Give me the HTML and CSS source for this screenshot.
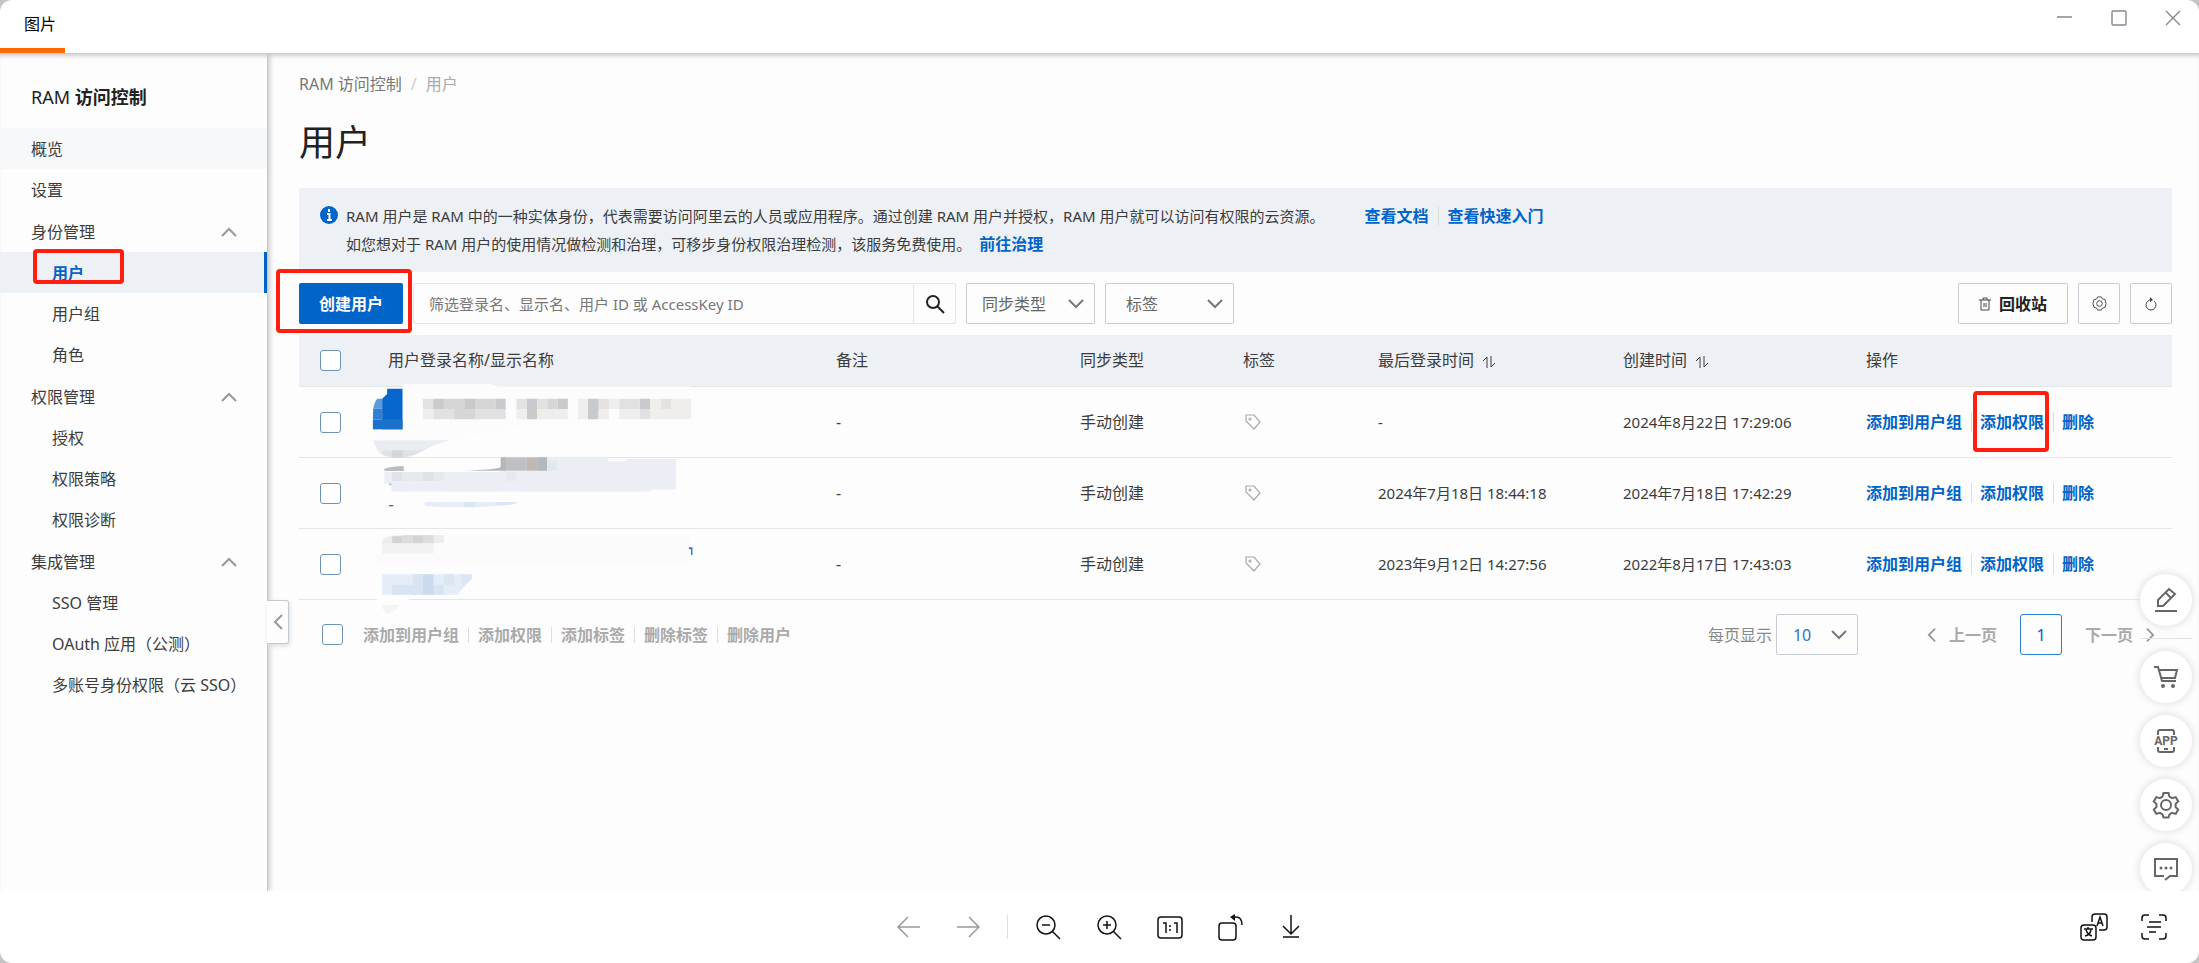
FILE: index.html
```html
<!DOCTYPE html>
<html lang="zh-CN">
<head>
<meta charset="utf-8">
<title>图片</title>
<link rel="stylesheet" href="styles.css">
</head>
<body>
<svg class="defs" aria-hidden="true">
  <symbol id="down" viewBox="0 0 16 10"><path d="M1 1l7 7 7-7"/></symbol>
  <symbol id="up" viewBox="0 0 16 10"><path d="M1 9l7-7 7 7"/></symbol>
  <symbol id="left" viewBox="0 0 10 16"><path d="M9 1L2 8l7 7"/></symbol>
  <symbol id="right" viewBox="0 0 10 16"><path d="M1 1l7 7-7 7"/></symbol>
  <symbol id="tag" viewBox="0 0 16 16"><path d="M1 1h8l6 7-6 7-8-8z"/><circle cx="5" cy="5" r="1"/></symbol>
  <symbol id="sort" viewBox="0 0 14 14"><path d="M1 6l4-4v11M9 1v11l4-4"/></symbol>
  <symbol id="cog" viewBox="0 0 16 16"><path d="M6 1h4l1 2 3 1 1 4-1 4-3 1-1 2H6l-1-2-3-1-1-4 1-4 3-1z"/><circle cx="8" cy="8" r="3"/></symbol>
  <symbol id="gear" viewBox="0 0 28 28"><path d="M11.500 2h5l1 3.600 2.600 1.500 3.600-1 2.500 4.300-2.600 2.600v3l2.600 2.600-2.500 4.300-3.600-1-2.600 1.500-1 3.100h-5l-1-3.100-2.600-1.500-3.600 1-2.500-4.300 2.600-2.600v-3L1.800 10.400l2.500-4.300 3.600 1 2.600-1.500z"/><circle cx="14" cy="14" r="5"/></symbol>
</svg>
<div class="window">
  <header class="titlebar">
    <h1 class="tab">图片</h1>
    <div class="window-controls">
      <button type="button" aria-label="最小化"><svg width="16" height="16" viewBox="0 0 16 16"><path d="M0 7h15"/></svg></button>
      <button type="button" aria-label="最大化"><svg width="16" height="16" viewBox="0 0 16 16"><rect x="1" y="1" width="14" height="14" rx="1"/></svg></button>
      <button type="button" aria-label="关闭"><svg width="16" height="16" viewBox="0 0 16 16"><path d="M1 1l14 14M15 1L1 15"/></svg></button>
    </div>
  </header>

  <div class="viewport">
    <aside class="sidebar">
      <h2 class="product">RAM <b>访问控制</b></h2>
      <nav class="nav">
        <a class="nav-item hover" href="#overview">概览</a>
        <a class="nav-item" href="#settings">设置</a>
        <div class="nav-group">
          <button type="button" class="nav-item">身份管理<svg class="chev" width="16" height="10"><use href="#up"/></svg></button>
          <a class="nav-item sub active" href="#users">用户<span class="mark mark-nav"></span></a>
          <a class="nav-item sub" href="#groups">用户组</a>
          <a class="nav-item sub" href="#roles">角色</a>
        </div>
        <div class="nav-group">
          <button type="button" class="nav-item">权限管理<svg class="chev" width="16" height="10"><use href="#up"/></svg></button>
          <a class="nav-item sub" href="#grants">授权</a>
          <a class="nav-item sub" href="#policies">权限策略</a>
          <a class="nav-item sub" href="#diagnosis">权限诊断</a>
        </div>
        <div class="nav-group">
          <button type="button" class="nav-item">集成管理<svg class="chev" width="16" height="10"><use href="#up"/></svg></button>
          <a class="nav-item sub" href="#sso">SSO 管理</a>
          <a class="nav-item sub" href="#oauth">OAuth 应用（公测）</a>
          <a class="nav-item sub" href="#cloudsso">多账号身份权限（云 SSO）</a>
        </div>
      </nav>
      <button type="button" class="collapse" aria-label="收起"><svg class="chev" width="10" height="16"><use href="#left"/></svg></button>
    </aside>

    <main class="main">
      <nav class="breadcrumb"><a href="#ram">RAM 访问控制</a><span class="slash">/</span><span class="current">用户</span></nav>
      <h2 class="page-title">用户</h2>

      <section class="notice">
        <svg class="info" width="18" height="18" viewBox="0 0 18 18"><circle cx="9" cy="9" r="9"/><path d="M9 3v3M7 8h2.500v6M7 14h5"/></svg>
        <div class="notice-text">
          <p>RAM 用户是 RAM 中的一种实体身份，代表需要访问阿里云的人员或应用程序。通过创建 RAM 用户并授权，RAM 用户就可以访问有权限的云资源。<span class="doc-links"><a href="#docs">查看文档</a><a href="#quickstart">查看快速入门</a></span></p>
          <p>如您想对于 RAM 用户的使用情况做检测和治理，可移步身份权限治理检测，该服务免费使用。<a href="#governance">前往治理</a></p>
        </div>
      </section>

      <div class="toolbar">
        <div class="create-wrap"><button type="button" class="create">创建用户</button><span class="mark mark-create"></span></div>
        <form class="search">
          <input type="search" aria-label="筛选用户" placeholder="筛选登录名、显示名、用户 ID 或 AccessKey ID">
          <button type="button" aria-label="搜索"><svg width="20" height="20" viewBox="0 0 20 20"><circle cx="8" cy="8" r="6"/><path d="M12 12l7 7"/></svg></button>
        </form>
        <div class="select"><select aria-label="同步类型"><option>同步类型</option></select><svg class="chev" width="16" height="10"><use href="#down"/></svg></div>
        <div class="select wide"><select aria-label="标签"><option>标签</option></select><svg class="chev" width="16" height="10"><use href="#down"/></svg></div>
        <div class="tools">
          <button type="button" class="recycle"><svg width="12" height="14" viewBox="0 0 12 14"><path d="M0 3h12M4 3V1h4v2M2 3v10h8V3M5 6v4M7 6v4"/></svg>回收站</button>
          <button type="button" class="square" aria-label="设置"><svg width="15" height="15"><use href="#cog"/></svg></button>
          <button type="button" class="square" aria-label="刷新"><svg width="14" height="14" viewBox="0 0 14 14"><path d="M10 4a5 5 0 1 1-6 0q2-2 4-1"/><path class="solid" d="M6 0l3 3-3 2z"/></svg></button>
        </div>
      </div>

      <div class="table-wrap">
        <table class="users">
          <colgroup><col class="c-check"><col><col class="c-note"><col class="c-sync"><col class="c-tag"><col class="c-login"><col class="c-created"><col class="c-actions"></colgroup>
          <thead>
            <tr>
              <th><input type="checkbox" aria-label="全选"></th>
              <th>用户登录名称/显示名称</th><th>备注</th><th>同步类型</th><th>标签</th>
              <th>最后登录时间<svg class="sort" width="14" height="14"><use href="#sort"/></svg></th>
              <th>创建时间<svg class="sort" width="14" height="14"><use href="#sort"/></svg></th>
              <th>操作</th>
            </tr>
          </thead>
          <tbody>
            <tr>
              <td><input type="checkbox" aria-label="选择用户 1"></td><td></td><td>-</td><td>手动创建</td>
              <td><svg class="tag" width="16" height="16"><use href="#tag"/></svg></td>
              <td class="date">-</td><td class="date">2024年8月22日 17:29:06</td>
              <td><div class="actions"><a href="#add-group">添加到用户组</a><a href="#add-perm">添加权限<span class="mark mark-perm"></span></a><a href="#delete">删除</a></div></td>
            </tr>
            <tr>
              <td><input type="checkbox" aria-label="选择用户 2"></td><td></td><td>-</td><td>手动创建</td>
              <td><svg class="tag" width="16" height="16"><use href="#tag"/></svg></td>
              <td class="date">2024年7月18日 18:44:18</td><td class="date">2024年7月18日 17:42:29</td>
              <td><div class="actions"><a href="#add-group">添加到用户组</a><a href="#add-perm">添加权限</a><a href="#delete">删除</a></div></td>
            </tr>
            <tr>
              <td><input type="checkbox" aria-label="选择用户 3"></td><td></td><td>-</td><td>手动创建</td>
              <td><svg class="tag" width="16" height="16"><use href="#tag"/></svg></td>
              <td class="date">2023年9月12日 14:27:56</td><td class="date">2022年8月17日 17:43:03</td>
              <td><div class="actions"><a href="#add-group">添加到用户组</a><a href="#add-perm">添加权限</a><a href="#delete">删除</a></div></td>
            </tr>
          </tbody>
        </table>
        <svg class="redaction" width="330" height="233" viewBox="280 160 924 699" preserveAspectRatio="none" aria-hidden="true">
          <path fill="#fcfcfc" d="M372 163h246l18 7h540v121H720L500 332H290v-34h82z"/>
          <path fill="#0766cb" d="M328 177h43v122h-57v-92l14-14z"/>
          <path fill="#5b9add" d="M300 207h14v30h-25q3-20 11-30z"/>
          <path fill="#2f7fd3" d="M289 237h25v32h-26z"/>
          <path fill="#1a72cd" d="M288 269h83v30h-83z"/>
          <path fill="#e9edf3" d="M290 332h212q-42 12-70 30-36 20-60 22h-30q-36-4-42-26-8-10-10-26z"/>
          <path fill="#dfe2e7" d="M314 362h118q-36 20-60 22h-30q-18-4-28-12z"/>
          <path fill="#d4d6da" d="M342 362h30v22h-30z"/>
          <g>
            <path fill="#e5e3e2" d="M428 207h29v31h-29zM690 207h29v31h-29zM920 207h29v31h-29zM1094 207h29v31h-29z"/>
            <path fill="#c8cacd" d="M457 207h30v31h-30zM631 207h29v31h-29zM719 207h29v31h-29zM805 207h29v31h-29zM890 207h30v31h-30zM1035 207h29v31h-29z"/>
            <path fill="#d7d6d6" d="M487 207h57v31h-57zM574 207h57v31h-57zM776 207h29v31h-29zM515 238h59v31h-59z"/>
            <path fill="#cacaca" d="M544 207h30v31h-30zM719 238h29v31h-29zM890 238h30v31h-30z"/>
            <path fill="#e2e1e1" d="M748 207h28v31h-28zM978 207h57v31h-57zM457 238h58v31h-58zM574 238h86v31h-86zM1035 238h29v31h-29z"/>
            <path fill="#efeeed" d="M428 238h29v31h-29zM690 238h29v31h-29zM748 238h86v31h-86zM862 207h28v62h-28zM949 207h29v31h-29zM920 238h29v31h-29zM978 238h57v31h-57zM1064 207h30v62h-30zM1094 238h85v31h-85zM1123 207h56v31h-56z"/>
          </g>
          <path fill="#fdfdfd" d="M325 386h320v30l-100 10H378l-3-18h-50z"/>
          <path fill="#ebeff5" d="M646 381h300v14h51v-7h140v92h-72v6H340v-24h-20v-35h325z"/>
          <path fill="#b9bcc0" d="M320 418q15-8 54-9l1 15h-55z"/>
          <path fill="#b4b8ba" d="M646 383h15v40H543q80-2 103-10zM748 383h28v40h-28z"/>
          <path fill="#bfc0c4" d="M661 383h58v40h-58z"/>
          <path fill="#c0b8b4" d="M719 383h29v40h-29z"/>
          <path fill="#e0e8f2" d="M776 392h28v31h-28z"/>
          <path fill="#dfe2e7" d="M342 427h29v27h-29zM428 427h30v27h-30z"/>
          <path fill="#e6e9ee" d="M371 427h57v27h-57zM458 427h28v27h-28zM661 427h29v27h-29z"/>
          <path fill="#6fa0da" d="M333 462h7v3h-7z"/>
          <path fill="#666" d="M333 526h12v4h-12z"/>
          <path fill="#e5edf8" d="M433 517h259q-12 10-35 10l-80 6H487l-54-4z"/>
          <path fill="#d9e6f5" d="M544 517h30v15h-30zM631 517h61q-12 10-61 10z"/>
          <path fill="#fbfbfb" d="M314 617h862v84H292v-30h22z"/>
          <path fill="#ededec" d="M314 632q15-14 43-15h130v24h-30v30H314z"/>
          <path fill="#d4d3d3" d="M342 620h29v21h-29zM400 617h28v24h-28z"/>
          <path fill="#dcdcdb" d="M371 617h29v24h-29zM428 617h30v24h-30z"/>
          <path fill="#f2f2f2" d="M314 641h143v30H314z"/>
          <path fill="#2b75cc" d="M1173 653h10v23h-4v-17l-6-1z"/>
          <path fill="#e4ecf8" d="M314 734h250l2 12-42 49H314z"/>
          <path fill="#d8e4f2" d="M342 765h86v30h-86zM458 765h28v30h-28zM400 734h28v31h-28z"/>
          <path fill="#ccdaf0" d="M428 734h30v61h-30z"/>
          <path fill="#dbe6f4" d="M486 734h29v31h-29zM535 734h29l2 12-20 19h-11z"/>
          <path fill="#fdfdfd" d="M300 797h90v16h-90z"/>
          <path fill="#f4f4f4" d="M314 826h50q-10 18-34 28-14-8-16-28z"/>
        </svg>
      </div>

      <footer class="table-footer">
        <input type="checkbox" aria-label="全选当前页">
        <div class="batch"><button type="button">添加到用户组</button><button type="button">添加权限</button><button type="button">添加标签</button><button type="button">删除标签</button><button type="button">删除用户</button></div>
        <div class="pagination">
          <label for="size">每页显示</label>
          <div class="select page-size"><select id="size"><option>10</option></select><svg class="chev" width="16" height="10"><use href="#down"/></svg></div>
          <button type="button" class="step"><svg class="chev" width="9" height="16"><use href="#left"/></svg>上一页</button>
          <button type="button" class="page">1</button>
          <button type="button" class="step">下一页<svg class="chev" width="9" height="16"><use href="#right"/></svg></button>
        </div>
      </footer>
    </main>

    <div class="floaters">
      <button type="button" aria-label="编辑"><svg width="24" height="26" viewBox="0 0 24 26"><path d="M1 24h22M4 19v-6L15 2l6 5L9 19zM12 6l5 5"/></svg></button>
      <hr>
      <button type="button" aria-label="购物车"><svg width="26" height="24" viewBox="0 0 26 24"><path d="M1 2h4l4 14h14M6 5h18l-2 8H8"/><circle class="solid" cx="10" cy="21" r="2"/><circle class="solid" cx="20" cy="21" r="2"/></svg></button>
      <button type="button" aria-label="APP"><svg width="26" height="26" viewBox="0 0 26 26"><path d="M5 7V4q0-2 2-2h12q2 0 2 2v3M5 19v3q0 2 2 2h12q2 0 2-2v-3M11 21h4"/><text x="13" y="17" text-anchor="middle">APP</text></svg></button>
      <button type="button" aria-label="设置"><svg width="28" height="28"><use href="#gear"/></svg></button>
      <button type="button" aria-label="反馈"><svg width="24" height="24" viewBox="0 0 24 24"><path d="M10 19H1V2h22v17h-7l-5 4"/><circle class="solid" cx="7" cy="11" r="1.500"/><circle class="solid" cx="12" cy="11" r="1.500"/><circle class="solid" cx="17" cy="11" r="1.500"/></svg></button>
    </div>
  </div>

  <footer class="viewer-bar">
    <div class="viewer-tools">
      <button type="button" class="dim" aria-label="上一张"><svg width="24" height="24" viewBox="0 0 24 24"><path d="M23 12H1M11 2L1 12l10 10"/></svg></button>
      <button type="button" class="dim" aria-label="下一张"><svg width="24" height="24" viewBox="0 0 24 24"><path d="M1 12h22M13 2l10 10-10 10"/></svg></button>
      <span class="bar-sep"></span>
      <button type="button" aria-label="缩小"><svg width="26" height="26" viewBox="0 0 26 26"><circle cx="11" cy="11" r="9"/><path d="M17 17l8 8M7 11h8"/></svg></button>
      <button type="button" aria-label="放大"><svg width="26" height="26" viewBox="0 0 26 26"><circle cx="11" cy="11" r="9"/><path d="M17 17l8 8M7 11h8M11 7v8"/></svg></button>
      <button type="button" aria-label="原始大小"><svg width="26" height="26" viewBox="0 0 26 26"><rect x="1" y="3" width="24" height="21" rx="3"/><path d="M6 9h3v10M17 9h3v10M13 11v2M13 15v2"/></svg></button>
      <button type="button" aria-label="旋转"><svg width="26" height="28" viewBox="0 0 26 28"><rect x="1" y="10" width="17" height="17" rx="3"/><path d="M16 4h2q6 0 6 8"/><path class="solid" d="M17 1v7l-5-4z"/></svg></button>
      <button type="button" aria-label="下载"><svg width="24" height="24" viewBox="0 0 24 24"><path d="M12 0v18M4 11l8 8 8-8M4 22h16"/></svg></button>
    </div>
    <div class="viewer-extra">
      <button type="button" aria-label="翻译"><svg width="28" height="28" viewBox="0 0 28 28"><path d="M12 9V4q0-3 3-3h9q3 0 3 3v10q0 3-3 3h-5"/><rect x="1" y="12" width="15" height="15" rx="3"/><path d="M17 13l3-9 3 9M18 10h4M4 16h9M8 14v2M6 17q2 5 6 6M11 17q-1 5-6 6"/></svg></button>
      <button type="button" aria-label="文字识别"><svg width="26" height="26" viewBox="0 0 26 26"><path d="M1 7V4q0-3 3-3h4M18 1h4q3 0 3 3v3M25 19v3q0 3-3 3h-4M8 25H4q-3 0-3-3v-3M8 8h12M6 13h14M8 18h7"/></svg></button>
    </div>
  </footer>
</div>
</body>
</html>
```
FILE: styles.css
```css
* { box-sizing: border-box; }

:root {
  --blue: #0064c8;
  --ink: #3c3c3c;
  --pale: #edf1f6;
  --line: #e3e5e7;
  --red: #ff1e10;
}

body {
  margin: 0;
  background: #c4c4c4;
  color: var(--ink);
  font: 16px/24px "Noto Sans", "Noto Sans CJK SC", sans-serif;
}

h1, h2, p { margin: 0; font-weight: 400; }
a { color: inherit; text-decoration: none; }
button, input, select { font: inherit; color: inherit; margin: 0; }
button { padding: 0; border: 0; background: none; }
svg { display: block; flex: none; fill: none; stroke: currentColor; stroke-width: 2; }
.solid { fill: currentColor; stroke: none; }
.defs { position: absolute; width: 0; height: 0; }
.chev { color: #999; }

.window {
  display: flex;
  flex-direction: column;
  min-height: 100vh;
  border-radius: 12px;
  background: #fff;
  overflow: hidden;
}

.titlebar { display: flex; justify-content: space-between; height: 53px; }
.tab {
  width: 65px;
  padding: 12px 0 0 24px;
  border-bottom: 5px solid #ff6a00;
  color: #000;
  font-size: 16px;
  white-space: nowrap;
}
.window-controls { display: flex; gap: 38px; align-items: flex-start; padding: 10px 18px; color: #85888f; }
.window-controls svg { stroke-width: 1.4; }

.viewport {
  position: relative;
  display: flex;
  flex: 1;
  overflow: hidden;
  background: #fdfdfd;
  box-shadow: inset 0 5px 5px -3px #bbb;
}

.sidebar {
  position: relative;
  flex: none;
  width: 268px;
  border-right: 1px solid #c4c8ce;
  box-shadow: 2px 0 5px #ccc;
}
.product { padding: 32px 0 19px 31px; font-size: 18px; white-space: nowrap; color: #222; }
.nav-group { padding-top: 1px; }
.nav-item {
  position: relative;
  display: flex;
  align-items: center;
  justify-content: space-between;
  width: 100%;
  height: 41px;
  padding: 0 30px 0 31px;
  white-space: nowrap;
}
.nav-item.sub { padding: 0 0 0 52px; }
.nav-item.hover { background: #f6f8fa; }
.nav-item.active { border-right: 3px solid var(--blue); background: var(--pale); color: var(--blue); font-weight: 700; }

.mark { position: absolute; border: 4px solid var(--red); border-radius: 4px; pointer-events: none; }
.mark-nav { left: 33px; top: -3px; width: 91px; height: 35px; }
.mark-create { inset: -14px -9px -9px -23px; z-index: 1; }
.mark-perm { inset: -21px -5px -20px -7px; }

.collapse {
  position: absolute;
  z-index: 2;
  left: 267px;
  top: 547px;
  display: flex;
  align-items: center;
  justify-content: center;
  width: 22px;
  height: 44px;
  border: 1px solid #c4cad2;
  border-left: 0;
  border-radius: 0 3px 3px 0;
  background: #fdfdfd;
  box-shadow: 1px 2px 4px #ddd;
}

.main { flex: 1; min-width: 0; padding: 19px 27px 0 31px; }
.breadcrumb { display: flex; color: #777; }
.slash { padding: 0 9px; color: #ccc; }
.current { color: #aaa; }
.page-title { padding: 22px 0 20px; font-size: 36px; line-height: 50px; color: #222; }

.notice { display: flex; gap: 8px; padding: 14px 21px; background: var(--pale); }
.notice-text { font-size: 15px; line-height: 28px; }
.info { margin-top: 4px; stroke: #fff; }
.info circle { fill: var(--blue); stroke: none; }
.notice a { color: var(--blue); font-weight: 700; font-size: 16px; }
.notice p { display: flex; }
.notice p > a { padding-left: 8px; }
.doc-links { display: flex; align-items: center; padding-left: 40px; }
.doc-links a + a { margin-left: 9px; padding-left: 9px; border-left: 1px solid #ddd; line-height: 20px; }

.toolbar { display: flex; gap: 10px; margin: 11px 0; height: 41px; }
.create-wrap { position: relative; }
.create { width: 104px; height: 41px; border-radius: 2px; background: var(--blue); color: #fff; font-weight: 700; }
.search { display: flex; width: 543px; border: 1px solid #e3e5e7; border-radius: 2px; }
.search input { flex: 1; min-width: 0; padding: 0 15px; border: 0; background: none; font-size: 15px; }
.search input::placeholder { color: #777; opacity: 1; }
.search button { display: flex; align-items: center; justify-content: center; width: 42px; border-left: 1px solid #e3e5e7; color: #222; }
.select { position: relative; width: 129px; }
.select select {
  width: 100%;
  height: 41px;
  padding: 0 15px;
  appearance: none;
  border: 1px solid #c8cdd4;
  border-radius: 2px;
  background: transparent;
  color: #666;
}
.select.wide select { padding-left: 20px; }
.select .chev { position: absolute; right: 11px; top: 16px; color: #777; pointer-events: none; }
.tools { display: flex; gap: 10px; margin-left: auto; }
.tools button { display: flex; align-items: center; justify-content: center; gap: 8px; height: 41px; border: 1px solid #c8cdd4; border-radius: 2px; }
.tools svg { stroke-width: 1; color: #444; }
.tools .recycle { width: 110px; color: #222; font-weight: 700; }
.tools .square { width: 42px; }

input[type="checkbox"] {
  display: block;
  flex: none;
  width: 21px;
  height: 21px;
  appearance: none;
  border: 1px solid #6f93b8;
  border-radius: 3px;
  background: #fff;
}

.table-wrap { position: relative; }
.users { width: 100%; border-collapse: separate; border-spacing: 0; table-layout: fixed; }
.c-check { width: 73px; }
.c-note { width: 244px; }
.c-sync { width: 163px; }
.c-tag { width: 135px; }
.c-login { width: 245px; }
.c-created { width: 243px; }
.c-actions { width: 322px; }
.users th, .users td { padding: 0 0 0 16px; border-bottom: 1px solid var(--line); text-align: left; font-weight: 400; white-space: nowrap; }
.users th:first-child, .users td:first-child { padding-left: 21px; }
.users th { height: 52px; padding-bottom: 2px; background: var(--pale); }
.users th:first-child { padding-bottom: 0; }
.users td { height: 71px; }
.users .date { font-size: 15px; }
.sort { display: inline-block; margin-left: 8px; vertical-align: -3px; stroke-width: 1; }
.tag { margin-left: 2px; color: #aaa; stroke-width: 1.2; }
.actions { display: flex; align-items: center; color: var(--blue); font-weight: 700; line-height: 20px; }
.actions a { position: relative; }
.actions a + a { margin-left: 18px; }
.actions a + a::before { content: ""; position: absolute; left: -9px; top: 0; height: 20px; border-left: 1px solid #ddd; }
.redaction { position: absolute; left: 71px; top: 48px; stroke: none; pointer-events: none; }

.table-footer { display: flex; align-items: center; height: 41px; margin-top: 14px; padding: 0 17px 0 23px; }
.batch { display: flex; padding-left: 20px; line-height: 16px; }
.batch button { color: #aaa; font-weight: 700; }
.batch button + button { margin-left: 9px; padding-left: 9px; border-left: 1px solid #ddd; }
.pagination { display: flex; align-items: center; margin-left: auto; color: #888; }
.page-size { width: 82px; margin-left: 4px; }
.page-size select { padding-left: 16px; color: #2b75cc; }
.step { display: flex; align-items: center; gap: 13px; color: #aaa; font-weight: 700; }
.page-size + .step { margin-left: 69px; }
.page { width: 42px; height: 41px; margin: 0 23px; border: 1px solid #2b7cd2; border-radius: 3px; color: var(--blue); }

.floaters { position: absolute; z-index: 2; right: 7px; top: 521px; display: flex; flex-direction: column; gap: 12px; color: #666; }
.floaters button { display: flex; align-items: center; justify-content: center; width: 52px; height: 52px; border-radius: 50%; background: #fff; box-shadow: 0 0 8px #d8d8d8; }
.floaters hr { width: 52px; height: 1px; margin: 0; border: 0; background: #dde3e6; }
.floaters text { fill: currentColor; stroke: none; font: 700 12px "Roboto", sans-serif; }

.viewer-bar { position: relative; display: flex; align-items: center; justify-content: center; height: 72px; color: #111; }
.viewer-tools { display: flex; align-items: center; gap: 35px; }
.viewer-bar svg { stroke-width: 1.5; }
.viewer-bar .dim { color: #999; }
.bar-sep { height: 24px; margin: 0 -8px; border-left: 1px solid #ddd; }
.viewer-extra { position: absolute; right: 32px; display: flex; align-items: center; gap: 33px; }
```
